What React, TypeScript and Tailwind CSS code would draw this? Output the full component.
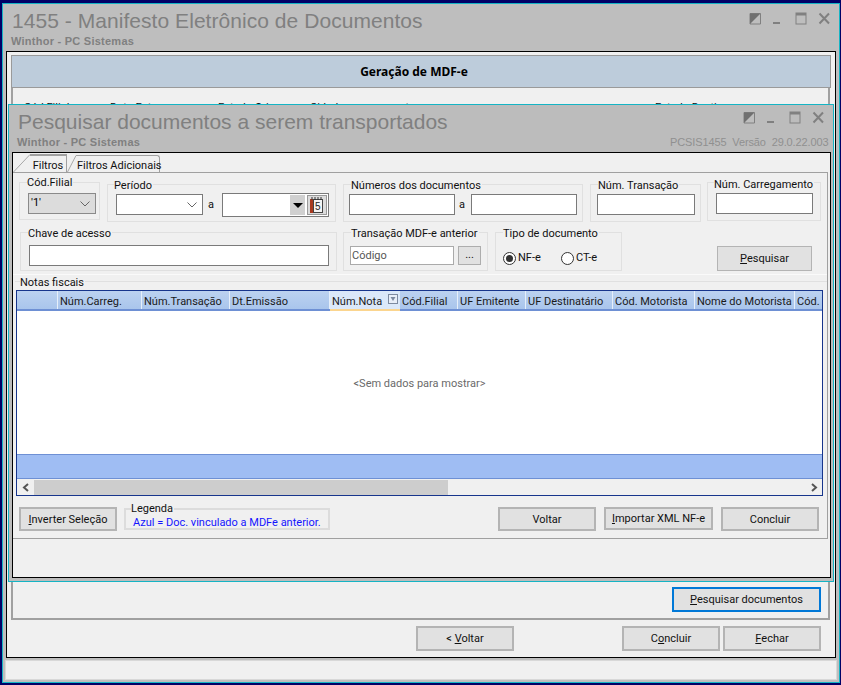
import React from "react";

const FONT = "font-['Roboto',sans-serif] text-[11px]";

function WinIcons({ className = "" }: { className?: string }) {
  return (
    <svg width="82" height="14" viewBox="0 0 82 14" className={className}>
      <path d="M1 1.5h10.5v10.5H1z" fill="#bebebe" stroke="#808080" strokeWidth="1" />
      <path d="M1 12L11.5 1.5H1z" fill="#707070" />
      <rect x="24" y="10" width="7" height="2" fill="#808080" />
      <rect x="47" y="1" width="10" height="11" fill="none" stroke="#808080" strokeWidth="1" />
      <rect x="47" y="1" width="10" height="2.5" fill="#808080" />
      <path d="M70.5 1.5L80 11.5M80 1.5L70.5 11.5" stroke="#808080" strokeWidth="2" />
    </svg>
  );
}

function Group({ label, className, labelClass = "left-[7px] top-[-6px]", children }: { label: string; className: string; labelClass?: string; children?: React.ReactNode }) {
  return (
    <div className={`relative box-border border border-[#e0e0e0] ${className}`}>
      <span className={`absolute bg-[#f0f0f0] pr-[1px] leading-[14px] whitespace-nowrap text-[#111] ${labelClass}`}>{label}</span>
      {children}
    </div>
  );
}

function Btn({ children, className = "" }: { children: React.ReactNode; className?: string }) {
  return (
    <div className={`box-border border-2 border-[#b4b4b4] bg-[#e1e1e1] pt-[2px] flex items-center justify-center whitespace-nowrap text-[#111] ${className}`}>
      {children}
    </div>
  );
}

function Input({ className = "", children }: { className?: string; children?: React.ReactNode }) {
  return <div className={`box-border border border-[#7a7a7a] bg-white ${className}`}>{children}</div>;
}

function Chevron({ className = "" }: { className?: string }) {
  return (
    <svg width="10" height="6" viewBox="0 0 10 6" className={className}>
      <path d="M0.5 0.5L5 5L9.5 0.5" fill="none" stroke="#666" strokeWidth="1" />
    </svg>
  );
}

function Radio({ on }: { on?: boolean }) {
  return (
    <svg width="13" height="13" viewBox="0 0 13 13">
      <circle cx="6.5" cy="6.5" r="6" fill="#fff" stroke="#333" />
      {on && <circle cx="6.5" cy="6.5" r="3.5" fill="#333" />}
    </svg>
  );
}

function Calendar() {
  return (
    <svg width="16" height="18" viewBox="0 0 16 18">
      <rect x="1" y="3" width="4" height="14" fill="#a83b20" />
      <rect x="4.500" y="3.500" width="9" height="13" fill="#f4f4f4" stroke="#444" />
      <path d="M3 1v3M6 1v3M9 1v3M12 1v3" stroke="#333" strokeWidth="1" />
      <text x="6" y="14" fontSize="10" fontFamily="Liberation Sans" fill="#222">5</text>
    </svg>
  );
}

const cols: [string, number][] = [
  ["", 41],
  ["Núm.Carreg.", 84],
  ["Núm.Transação", 88],
  ["Dt.Emissão", 100],
  ["Núm.Nota", 70],
  ["Cód.Filial", 58],
  ["UF Emitente", 68],
  ["UF Destinatário", 87],
  ["Cód. Motorista", 82],
  ["Nome do Motorista", 100],
  ["Cód. Transportadora", 120],
];

function Grid() {
  return (
    <div className="box-border w-[807px] h-[206px] border border-[#17358c] bg-[#f0f0f0] flex flex-col overflow-hidden">
      <div className="flex h-[20px] shrink-0 bg-gradient-to-b from-[#bcd2f0] to-[#a9c5ec] border-b-2 border-[#6e90d4]">
        {cols.map(([c, w], i) =>
          c === "Núm.Nota" ? (
            <div key={i} style={{ width: w }} className="shrink-0 relative box-border h-[20px] bg-[#dbe8f9] border-b-2 border-[#fbd58f] pl-[2px] leading-[21px] text-[#1a1a1a] whitespace-nowrap">
              {c}
              <svg width="10" height="10" viewBox="0 0 10 10" className="absolute right-[2px] top-[3px]">
                <rect x="0.500" y="0.500" width="9" height="9" fill="#e8eef8" stroke="#7d8aa0" />
                <path d="M2.500 3h5L5 7z" fill="#7d8aa0" />
              </svg>
            </div>
          ) : (
            <div key={i} style={{ width: w }} className={`shrink-0 box-border pl-[2px] leading-[21px] text-[#1a1a1a] whitespace-nowrap overflow-hidden ${i < cols.length - 1 ? "border-r border-[#e6effa]" : ""}`}>
              {c}
            </div>
          )
        )}
      </div>
      <div className="h-[143px] shrink-0 bg-white pt-[3px] flex items-center justify-center text-[#6a6a6a]">&lt;Sem dados para mostrar&gt;</div>
      <div className="h-[25px] shrink-0 box-border bg-[#9fbdf3] border-y border-[#6e90d4]" />
      <div className="h-[16px] shrink-0 flex items-center">
        <div className="w-[17px] flex justify-center">
          <svg width="8" height="9" viewBox="0 0 8 9"><path d="M6 1L2 4.500L6 8" fill="none" stroke="#555" strokeWidth="2" /></svg>
        </div>
        <div className="w-[414px] h-[15px] bg-[#cdcdcd]" />
        <div className="flex-1" />
        <div className="w-[17px] flex justify-center">
          <svg width="8" height="9" viewBox="0 0 8 9"><path d="M2 1L6 4.500L2 8" fill="none" stroke="#555" strokeWidth="2" /></svg>
        </div>
      </div>
    </div>
  );
}

function Modal() {
  return (
    <div className="absolute left-[8px] top-[104px] box-border w-[826px] h-[478px] border border-[#15b4c4] bg-[#bcbcbc] flex flex-col">
      <div className="h-[47px] shrink-0 relative">
        <div className="absolute left-[9px] top-[4px] font-['Liberation_Sans',sans-serif] text-[21px] leading-[26px] text-[#808080] whitespace-nowrap">Pesquisar documentos a serem transportados</div>
        <div className="absolute left-[8px] top-[30px] font-['Liberation_Sans',sans-serif] text-[11px] font-bold leading-[14px] text-[#808080] tracking-[0.25px]">Winthor - PC Sistemas</div>
        <div className="absolute left-[661px] top-[30px] font-['Liberation_Sans',sans-serif] text-[11px] leading-[14px] text-[#909090] whitespace-nowrap tracking-[-0.12px]">PCSIS1455&nbsp; Versão&nbsp; 29.0.22.003</div>
        <WinIcons className="absolute left-[734px] top-[6px]" />
      </div>
      <div className="ml-[3px] box-border w-[819px] h-[426px] border border-black bg-[#f0f0f0] flex flex-col">
        <div className="h-[19px] shrink-0 relative flex items-end pl-[17px]">
          <svg width="18" height="19" viewBox="0 0 18 19" className="absolute left-[0px] top-0">
            <path d="M0.500 19L17 1.500" fill="none" stroke="#a8a8a8" />
          </svg>
          <div className="box-border h-[18px] w-[37px] border-t-2 border-[#0078d7] bg-[#f0f0f0] border-r border-[#a0a0a0] text-center leading-[20px] text-[#111] relative z-10">Filtros</div>
          <svg width="9" height="17" viewBox="0 0 9 17" className="shrink-0">
            <path d="M0.500 17L9 0.500" fill="none" stroke="#a8a8a8" />
          </svg>
          <div className="box-border h-[17px] w-[84px] pl-[1px] border-t border-r border-[#a0a0a0] rounded-tr-[3px] leading-[19px] text-[#111] whitespace-nowrap">Filtros Adicionais</div>
        </div>
        <div className="box-border w-[815px] h-[367px] border-t border-r border-b border-[#a0a0a0] flex flex-col">
          <div className="flex items-start pl-[6px] h-[49px] shrink-0">
            <Group label="Cód.Filial" className="mt-[9px] w-[81px] h-[38px] pl-[8px] pt-[10px]" labelClass="left-[7px] top-[-7px]">
              <div className="box-border w-[68px] h-[21px] border border-[#8a8a8a] bg-[#dcdcdc] flex items-center justify-between pl-[2px] pr-[5px]">
                <span>'1'</span><Chevron />
              </div>
            </Group>
            <Group label="Período" className="ml-[7px] mt-[11px] w-[229px] h-[38px] pl-[8px] pt-[9px] flex items-start" labelClass="left-[6px] top-[-6px]">
              <Input className="w-[87px] h-[21px] flex items-center justify-end pr-[5px]"><Chevron /></Input>
              <span className="ml-[5px] w-[14px] leading-[21px] text-[#111]">a</span>
              <Input className="-mt-[1px] w-[107px] h-[24px] flex items-center justify-end pr-[1px] gap-[2px]">
                <div className="w-[15px] h-[20px] bg-[#d0d0d0] flex items-center justify-center">
                  <svg width="10" height="5" viewBox="0 0 10 5"><path d="M0 0h10L5 5z" fill="#000" /></svg>
                </div>
                <div className="w-[20px] h-[20px] box-border border border-[#999] bg-[#dcdcdc] flex items-center justify-center"><Calendar /></div>
              </Input>
            </Group>
            <Group label="Números dos documentos" className="ml-[7px] mt-[11px] w-[240px] h-[38px] pl-[5px] pt-[9px] flex items-start">
              <Input className="w-[106px] h-[21px]" />
              <span className="ml-[4px] w-[12px] leading-[21px] text-[#111]">a</span>
              <Input className="w-[106px] h-[21px]" />
            </Group>
            <Group label="Núm. Transação" className="ml-[7px] mt-[11px] w-[111px] h-[38px] pl-[6px] pt-[9px]">
              <Input className="w-[98px] h-[21px]" />
            </Group>
            <Group label="Núm. Carregamento" className="ml-[6px] mt-[9px] w-[114px] h-[39px] pl-[8px] pt-[10px]" labelClass="left-[6px] top-[-5px]">
              <Input className="w-[97px] h-[21px]" />
            </Group>
          </div>
          <div className="flex items-start pl-[7px] mt-[10px] h-[39px] shrink-0">
            <Group label="Chave de acesso" className="w-[317px] h-[39px] pl-[8px] pt-[12px]">
              <Input className="w-[300px] h-[21px]" />
            </Group>
            <Group label="Transação MDF-e anterior" className="ml-[6px] w-[145px] h-[39px] pl-[6px] pt-[13px] flex items-start">
              <Input className="w-[104px] h-[19px] pl-[1px] leading-[17px] !border-[#aaa] text-[#555]">Código</Input>
              <div className="ml-[4px] box-border w-[23px] h-[19px] border border-[#adadad] bg-[#e1e1e1] text-center leading-[16px] text-[#111]">...</div>
            </Group>
            <Group label="Tipo de documento" className="ml-[7px] w-[127px] h-[39px] pl-[7px] pt-[14px] flex items-center gap-[2px] text-[#111]">
              <Radio on /><span className="w-[41px]">NF-e</span><Radio /><span>CT-e</span>
            </Group>
            <Btn className="ml-[95px] mt-[14px] w-[95px] h-[25px] !border"><span><u>P</u>esquisar</span></Btn>
          </div>
          <div className="h-px w-full bg-[#fafafa] mt-[3px] shrink-0" />
          <div className="relative ml-[2px] mt-[6px] h-[258px] box-border border-t border-[#e0e0e0] shrink-0">
            <span className="absolute left-[5px] top-[-6px] bg-[#f0f0f0] leading-[14px] pr-[1px] text-[#111]">Notas fiscais</span>
            <div className="pt-[8px] ml-[1px]"><Grid /></div>
            <div className="flex items-start mt-[11px] ml-[4px]">
              <Btn className="w-[98px] h-[24px]"><span><u>I</u>nverter Seleção</span></Btn>
              <Group label="Legenda" className="ml-[7px] mt-[1px] w-[206px] h-[22px] pl-[7px] pt-[6px] !border-[#dcdcdc] !border-2 leading-[13px] text-[#1414ff] whitespace-nowrap" labelClass="left-[5px] top-[-8px]">
                Azul = Doc. vinculado a MDFe anterior.
              </Group>
              <Btn className="ml-[168px] w-[98px] h-[24px]">Voltar</Btn>
              <Btn className="ml-[8px] w-[109px] h-[23px]"><span><u>I</u>mportar XML NF-e</span></Btn>
              <Btn className="ml-[8px] w-[98px] h-[24px]">Concluir</Btn>
            </div>
          </div>
        </div>
      </div>
    </div>
  );
}

export default function App() {
  return (
    <div className={`relative w-[841px] h-[685px] bg-[#000066] pt-[3px] pl-[2px] box-border overflow-hidden ${FONT}`}>
      <div className="box-border w-[838px] h-[680px] border border-[#15b4c4] bg-[#bebebe] flex flex-col">
        <div className="h-[47px] shrink-0 relative">
          <div className="absolute left-[9px] top-[4px] font-['Liberation_Sans',sans-serif] text-[21px] leading-[26px] text-[#808080] whitespace-nowrap tracking-[0.05px]">1455 - Manifesto Eletrônico de Documentos</div>
          <div className="absolute left-[8px] top-[30px] font-['Liberation_Sans',sans-serif] text-[11px] font-bold leading-[14px] text-[#808080] tracking-[0.25px]">Winthor - PC Sistemas</div>
          <WinIcons className="absolute left-[746px] top-[8px]" />
        </div>
        <div className="ml-[3px] box-border w-[830px] h-[607px] border border-black bg-[#f0f0f0] pl-[4px] pt-[3px] flex flex-col">
          <div className="box-border w-[820px] h-[33px] shrink-0 border border-[#9a9a9a] bg-[#bdccdb] flex items-center justify-center pr-[14px] font-['Noto_Sans',sans-serif] font-bold text-[12px] text-black">Geração de MDF-e</div>
          <div className="box-border w-[819px] h-[532px] shrink-0 border-x-2 border-b-2 border-[#a0a0a0] bg-[#f0f0f0] relative">
            <div className="flex pl-[11px] pt-[12px] whitespace-nowrap text-[#111]">
              <span className="w-[86px]">Cód.Filial</span>
              <span className="w-[108px]">Data Entrega</span>
              <span className="w-[92px]">Estado Origem</span>
              <span className="w-[345px]">Cidade carregamento</span>
              <span>Estado Destino</span>
            </div>
          </div>
          <div className="flex justify-end w-[819px] -mt-[33px] pr-[9px] relative">
            <div className="box-border w-[149px] h-[25px] border-2 border-[#0078d7] bg-[#e1e1e1] pt-[2px] flex items-center justify-center text-[#111]"><span><u>P</u>esquisar documentos</span></div>
          </div>
          <div className="flex w-[819px] mt-[14px] pl-[405px]">
            <Btn className="w-[98px] h-[25px]"><span>&lt; <u>V</u>oltar</span></Btn>
            <Btn className="ml-[108px] w-[98px] h-[25px]"><span>C<u>o</u>ncluir</span></Btn>
            <Btn className="ml-[3px] w-[98px] h-[25px]"><span><u>F</u>echar</span></Btn>
          </div>
        </div>
        <div className="ml-[2px] mt-[2px] box-border w-[832px] h-[20px] bg-[#f0f0f0] border border-[#d8d8d8]" />
      </div>
      <Modal />
    </div>
  );
}
